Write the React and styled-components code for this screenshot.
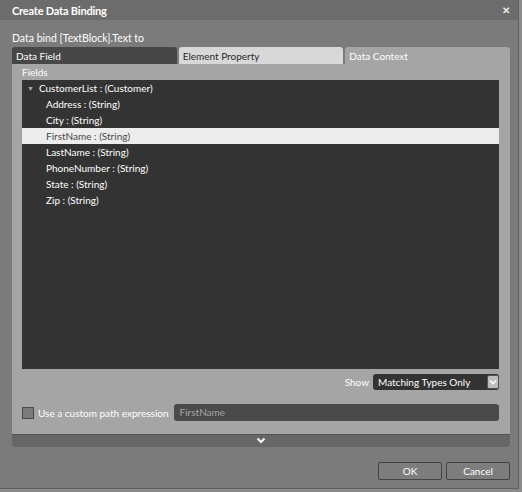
import React from "react";
import styled, { createGlobalStyle } from "styled-components";

const GlobalStyle = createGlobalStyle`
  html, body {
    margin: 0;
    padding: 0;
    background: #8a8a8a;
  }
  body {
    font-family: Lato, "Open Sans", sans-serif;
    font-size: 10px;
  }
`;

const fields = [
  "Address",
  "City",
  "FirstName",
  "LastName",
  "PhoneNumber",
  "State",
  "Zip",
];

export default function App() {
  return (
    <>
      <GlobalStyle />
      <Dialog>
        <TitleBar>
          <Title>Create Data Binding</Title>
          <Close>✕</Close>
        </TitleBar>
        <Body>
          <Caption>Data bind [TextBlock].Text to</Caption>
          <Tabs>
            <Tab variant="dark">Data Field</Tab>
            <Tab variant="light">Element Property</Tab>
            <Tab variant="active">Data Context</Tab>
          </Tabs>
          <Panel>
            <Label>Fields</Label>
            <Tree>
              <Row>
                <Arrow>▼</Arrow>
                CustomerList : (Customer)
              </Row>
              {fields.map((f) => (
                <Row key={f} child selected={f === "FirstName"}>
                  {f} : (String)
                </Row>
              ))}
            </Tree>
            <ShowRow>
              <ShowLabel>Show</ShowLabel>
              <Select>
                <span>Matching Types Only</span>
                <SelectBtn>
                  <svg width="8" height="6" viewBox="0 0 8 6">
                    <path d="M1 1.5 L4 4.5 L7 1.5" stroke="#fff" strokeWidth="1.6" fill="none" />
                  </svg>
                </SelectBtn>
              </Select>
            </ShowRow>
            <PathRow>
              <Check />
              <PathLabel>Use a custom path expression</PathLabel>
              <PathInput>FirstName</PathInput>
            </PathRow>
          </Panel>
          <Expander>
            <svg width="10" height="8" viewBox="0 0 10 8">
              <path d="M1.5 1.5 L5 5 L8.5 1.5" stroke="#fff" strokeWidth="2" fill="none" />
            </svg>
          </Expander>
          <Buttons>
            <Button>OK</Button>
            <Button>Cancel</Button>
          </Buttons>
        </Body>
      </Dialog>
    </>
  );
}

const Dialog = styled.div`
  width: 518px;
  height: 488px;
  background: #7b7b7b;
  border-right: 1px solid #5e5e5e;
  border-bottom: 1px solid #5e5e5e;
  display: flex;
  flex-direction: column;
`;

const TitleBar = styled.div`
  height: 20px;
  background: #6c6c6c;
  display: flex;
  align-items: center;
  justify-content: space-between;
  padding: 0 8px 0 12px;
`;

const Title = styled.div`
  color: #fff;
  font-weight: 700;
  font-size: 11px;
  letter-spacing: -0.2px;
`;

const Close = styled.div`
  color: #e8e8e8;
  font-size: 10px;
  font-weight: 700;
`;

const Body = styled.div`
  padding: 0 8px 0 12px;
  display: flex;
  flex-direction: column;
`;

const Caption = styled.div`
  color: #fff;
  font-size: 10.5px;
  height: 27px;
  display: flex;
  align-items: flex-end;
  padding-bottom: 3px;
  box-sizing: border-box;
`;

const Tabs = styled.div`
  display: flex;
  gap: 2px;
  height: 17px;
`;

const tabBg = { dark: "#474747", light: "#d8d8d8", active: "#a5a5a5" };
const tabFg = { dark: "#fff", light: "#2a2a2a", active: "#fff" };

const Tab = styled.div`
  flex: 1;
  background: ${(p) => tabBg[p.variant]};
  color: ${(p) => tabFg[p.variant]};
  border-radius: 3px 3px 0 0;
  padding: 3px 0 0 4px;
  box-sizing: border-box;
`;

const Panel = styled.div`
  background: #a5a5a5;
  padding: 1px 11px 13px 10px;
  display: flex;
  flex-direction: column;
`;

const Label = styled.div`
  color: #fff;
  font-size: 10px;
  height: 15px;
  line-height: 15px;
`;

const Tree = styled.div`
  background: #333;
  height: 289px;
`;

const Row = styled.div`
  height: 16px;
  line-height: 16px;
  padding-left: ${(p) => (p.child ? "24px" : "5px")};
  color: ${(p) => (p.selected ? "#4a4a4a" : "#fff")};
  background: ${(p) => (p.selected ? "#ececec" : "transparent")};
  display: flex;
  align-items: center;
`;

const Arrow = styled.span`
  font-size: 7px;
  color: #aaa;
  margin-right: 5px;
`;

const ShowRow = styled.div`
  display: flex;
  justify-content: flex-end;
  align-items: center;
  gap: 4px;
  margin-top: 5px;
`;

const ShowLabel = styled.span`
  color: #fff;
  font-size: 10px;
`;

const Select = styled.div`
  width: 126px;
  height: 16px;
  background: #333;
  border-radius: 3px;
  color: #fff;
  display: flex;
  align-items: center;
  justify-content: space-between;
  padding-left: 5px;
  box-sizing: border-box;
`;

const SelectBtn = styled.div`
  width: 12px;
  height: 14px;
  background: #bdbdbd;
  border: 1px solid #555;
  border-radius: 2px;
  display: flex;
  align-items: center;
  justify-content: center;
  box-sizing: border-box;
`;

const PathRow = styled.div`
  display: flex;
  align-items: center;
  margin-top: 14px;
`;

const Check = styled.div`
  width: 10px;
  height: 10px;
  background: #7a7a7a;
  border: 1px solid #4a4a4a;
  margin-right: 4px;
  flex-shrink: 0;
`;

const PathLabel = styled.span`
  color: #fff;
  white-space: nowrap;
  flex-shrink: 0;
  margin-right: 5px;
`;

const PathInput = styled.div`
  flex: 1;
  height: 17px;
  line-height: 17px;
  background: #4a4a4a;
  border-radius: 3px;
  color: #a6a6a6;
  padding-left: 6px;
`;

const Expander = styled.div`
  height: 12px;
  background: #666;
  border-top: 1px solid #555;
  border-radius: 0 0 3px 3px;
  display: flex;
  align-items: center;
  justify-content: center;
`;

const Buttons = styled.div`
  display: flex;
  justify-content: flex-end;
  gap: 4px;
  margin-top: 15px;
`;

const Button = styled.div`
  width: 62px;
  height: 16px;
  line-height: 16px;
  text-align: center;
  color: #fff;
  background: #7d7d7d;
  border: 1px solid #444;
  border-radius: 2px;
`;
